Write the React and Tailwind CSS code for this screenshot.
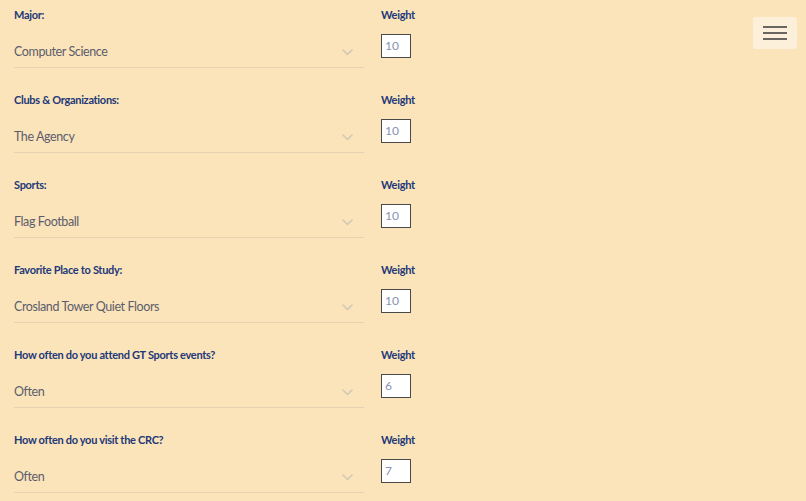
const rows = [
  { label: "Major:", value: "Computer Science", weight: "10" },
  { label: "Clubs & Organizations:", value: "The Agency", weight: "10" },
  { label: "Sports:", value: "Flag Football", weight: "10" },
  { label: "Favorite Place to Study:", value: "Crosland Tower Quiet Floors", weight: "10" },
  { label: "How often do you attend GT Sports events?", value: "Often", weight: "6" },
  { label: "How often do you visit the CRC?", value: "Often", weight: "7" },
];

function Chevron() {
  return (
    <svg className="w-[11px] h-[7px] mr-[11px]" viewBox="0 0 11 7" fill="none">
      <path d="M1 1l4.5 4.5L10 1" stroke="#d2c8b4" strokeWidth="1.6" strokeLinecap="round" strokeLinejoin="round" />
    </svg>
  );
}

export default function App() {
  return (
    <div className="w-[806px] h-[501px] overflow-hidden bg-[#fbe4ba] relative font-['Lato',sans-serif]">
      <div className="pt-[9px] pl-[14px]">
        {rows.map((row, i) => (
          <div key={i} className="flex h-[85px] gap-[17px]">
            <div className="w-[350px]">
              <div className="text-[11px] leading-[12px] font-bold tracking-[-0.3px] text-[#223878]">{row.label}</div>
              <div className="mt-[15px] h-[32px] pt-[1px] flex items-center justify-between border-b border-[#e4d3b2]">
                <span className="text-[12.5px] tracking-[-0.4px] text-[#5b5d6c]">{row.value}</span>
                <Chevron />
              </div>
            </div>
            <div>
              <div className="text-[11px] leading-[12px] font-bold tracking-[-0.3px] text-[#223878]">Weight</div>
              <div className="mt-[13px] w-[30px] h-[24px] bg-white border-[1.5px] border-[#4a4a4a] flex items-center pl-[3px] text-[12px] text-[#8792b5]">
                {row.weight}
              </div>
            </div>
          </div>
        ))}
      </div>

      {/* menu toggle */}
      <button className="absolute top-[17px] left-[753px] w-[44px] h-[32px] rounded-[3px] bg-[#fdf0da] flex flex-col items-center justify-center gap-[4px]">
        <span className="block w-[24px] h-[2px] bg-[#6a6763]" />
        <span className="block w-[24px] h-[2px] bg-[#6a6763]" />
        <span className="block w-[24px] h-[2px] bg-[#6a6763]" />
      </button>
    </div>
  );
}
